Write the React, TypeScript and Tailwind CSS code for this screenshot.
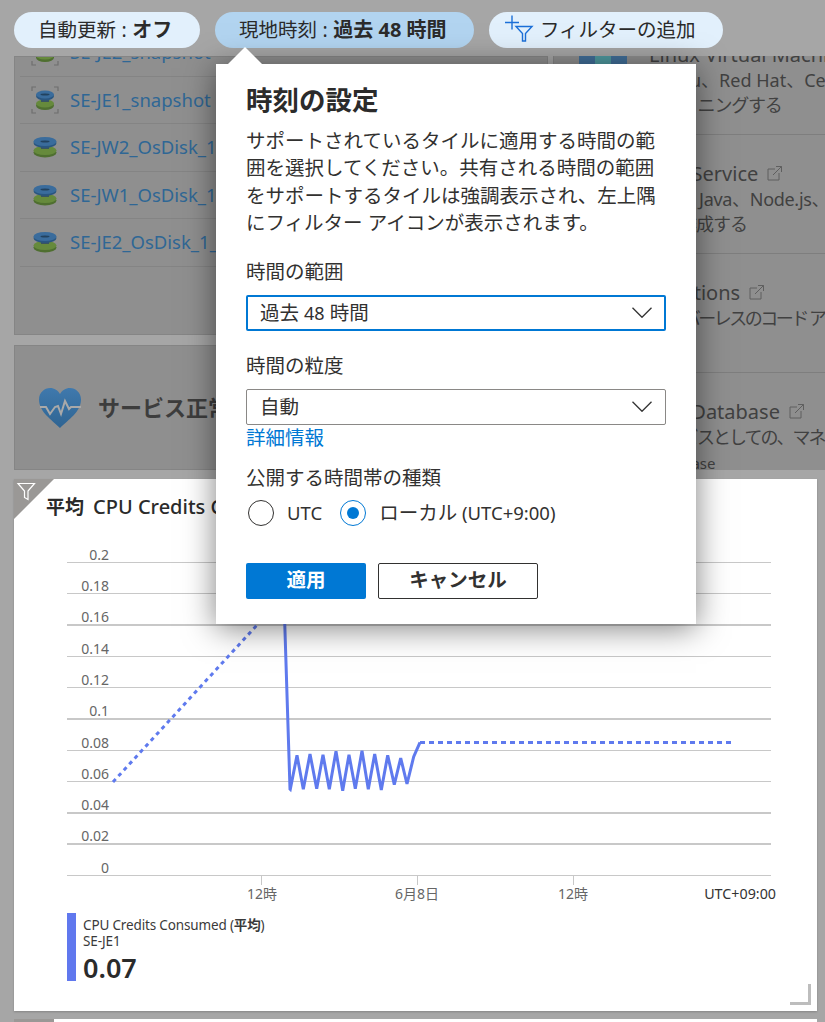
import React from 'react';

const cjk = "font-['Noto_Sans','Noto_Sans_CJK_JP',sans-serif]";

const diskRows = [
  { name: 'SE-JE2_snapshot', snapshot: true },
  { name: 'SE-JE1_snapshot', snapshot: true },
  { name: 'SE-JW2_OsDisk_1', snapshot: false },
  { name: 'SE-JW1_OsDisk_1', snapshot: false },
  { name: 'SE-JE2_OsDisk_1_', snapshot: false },
];

const gridLines = [
  { label: '0.2', y: 562.5, w: 1 },
  { label: '0.18', y: 593.5, w: 1 },
  { label: '0.16', y: 625, w: 2 },
  { label: '0.14', y: 656.5, w: 1 },
  { label: '0.12', y: 687.5, w: 1 },
  { label: '0.1', y: 719, w: 2 },
  { label: '0.08', y: 750.5, w: 1 },
  { label: '0.06', y: 781.5, w: 1 },
  { label: '0.04', y: 813, w: 2 },
  { label: '0.02', y: 844, w: 2 },
  { label: '0', y: 875.5, w: 1 },
];

const zigX = [691, 711, 730, 750, 770, 789, 808, 828, 848, 867, 886, 906, 925, 944, 964, 983, 1003, 1022, 1041, 1061, 1080];
const zigY = [508, 406, 508, 402, 506, 404, 508, 394, 512, 404, 506, 392, 508, 402, 510, 406, 494, 414, 492, 410, 367];
const zigzag = zigX.map((x, i) => `${(x / 3 + 60).toFixed(1)},${(zigY[i] / 3 + 620).toFixed(1)}`).join(' ');

const DiskIcon = ({ snapshot }: { snapshot: boolean }) => (
  <svg width="28" height="28" viewBox="0 0 28 28" className="shrink-0">
    {snapshot && (
      <path d="M1 5V1h4M23 1h4v4M27 23v4h-4M5 27H1v-4" fill="none" stroke="#6f6f6f" strokeWidth="1.2" />
    )}
    <ellipse cx="14" cy="19.500" rx={snapshot ? 9 : 11.5} ry={snapshot ? 4.5 : 5} fill="#4f6f30" />
    <ellipse cx="14" cy="17.500" rx={snapshot ? 9 : 11.5} ry={snapshot ? 4 : 4.5} fill="#668a3c" />
    <rect x="10" y="11" width="8" height="5" fill="#3a5560" />
    <ellipse cx="14" cy="10" rx={snapshot ? 9 : 11.5} ry={snapshot ? 4.5 : 5} fill="#2a5680" />
    <ellipse cx="14" cy="8.500" rx={snapshot ? 9 : 11.5} ry={snapshot ? 4 : 4.5} fill="#3a6c9c" />
    <ellipse cx="14" cy="8.500" rx="4.500" ry="1.100" fill="#22425f" />
  </svg>
);

const ExternalLink = () => (
  <svg width="17" height="17" viewBox="0 0 17 17" className="ml-2 shrink-0" fill="none" stroke="#5f5f5f" strokeWidth="1">
    <path d="M9 4H2v11h11V8" />
    <path d="M7 10l8.500-8.500M10 1.500h5.500V7" />
  </svg>
);

const Chevron = () => (
  <svg width="20" height="11" viewBox="0 0 20 11" fill="none" stroke="#333" strokeWidth="1.3">
    <path d="M0.500 0.800l9.500 9.500 9.500-9.500" />
  </svg>
);

const ServiceRow = ({ title, link = true, lines, small }: { title: string; link?: boolean; lines: { text: string; className?: string }[]; small?: string }) => (
  <div className="h-[119px] border-b border-[#7e7e7e] pl-[95px] pt-[25px] whitespace-nowrap text-[#414141]">
    <div className="flex items-center h-[27px] text-[20px] leading-[27px]">
      {title}
      {link && <ExternalLink />}
    </div>
    {lines.map((line) => (
      <div key={line.text} className={`text-[18px] h-[24.500px] leading-[24.500px] ${line.className ?? ''}`}>
        {line.text}
      </div>
    ))}
    {small && <div className="text-[15px] leading-[22px] mt-[2px]">{small}</div>}
  </div>
);

const FieldLabel = ({ children, className }: { children: React.ReactNode; className: string }) => (
  <div className={`text-[19.500px] leading-[27px] text-[#323130] ${className}`}>{children}</div>
);

const Radio = ({ checked }: { checked?: boolean }) => (
  <span className={`flex items-center justify-center w-[26px] h-[26px] rounded-full border ${checked ? 'border-[#0078d4]' : 'border-[#323130]'}`}>
    {checked && <span className="w-[12px] h-[12px] rounded-full bg-[#0078d4]" />}
  </span>
);

const App = () => {
  return (
    <div className={`relative w-[825px] h-[1022px] overflow-hidden bg-[#a6a6a6] ${cjk}`}>
      {/* Top bar */}
      <div className="relative z-10 flex items-center h-[56px] pl-[14px] pt-[4px] bg-[#a6a6a6] text-[#2b2b2b] text-[19.500px] whitespace-nowrap">
        <div className="flex items-center w-[186px] h-[36px] pl-[24px] rounded-full bg-[#e2f0fc]">
          自動更新<span className="mx-[5.500px]">:</span><b className="font-bold text-[20px]">オフ</b>
        </div>
        <div className="flex items-center w-[259px] h-[36px] ml-[15px] pl-[24px] rounded-full bg-[#b2d4f0]">
          現地時刻<span className="mx-[5.500px]">:</span><b className="font-bold text-[20px]">過去 48 時間</b>
        </div>
        <div className="flex items-center w-[234px] h-[36px] ml-[15px] pl-[16px] rounded-full bg-[#e2f0fc]">
          <svg width="30" height="28" viewBox="0 0 30 28" fill="none" stroke="#1b6fd8" strokeWidth="1.4" className="-mt-[3px] mr-[5px]">
            <path d="M0 7.500h14M7 0.500v14" />
            <path d="M11 11.500h16l-6.500 7v7.500h-3v-7.500z" />
          </svg>
          フィルターの追加
        </div>
      </div>

      {/* Dimmed dashboard behind the dialog */}
      <div className="pl-[14px]">
        <div className="grid grid-cols-[534px_272px] gap-x-[5px] h-[414px]">
          <div className="flex flex-col gap-y-[10px]">
            <div className="h-[279px] overflow-hidden bg-[#8f8f8f] border border-[#858585]">
              <div className="-mt-[28px]">
                {diskRows.map((row) => (
                  <div key={row.name} className="flex items-center h-[47.500px] ml-[5px] pl-[11px] border-b border-[#848484] text-[18.500px] text-[#2f6795]">
                    <DiskIcon snapshot={row.snapshot} />
                    <span className="ml-[11px] whitespace-nowrap">{row.name}</span>
                  </div>
                ))}
              </div>
            </div>
            <div className="flex items-center h-[125px] pl-[23px] bg-[#8f8f8f] border border-[#858585]">
              <svg width="44" height="42" viewBox="0 0 44 42">
                <defs>
                  <linearGradient id="heart" x1="0" y1="0" x2="0" y2="1">
                    <stop offset="0" stopColor="#3f79ad" />
                    <stop offset="1" stopColor="#2f6492" />
                  </linearGradient>
                </defs>
                <path d="M22 41C14 33 1 25 1 12.500 1 5.500 6.500 1 12 1c4.500 0 8 2.500 10 6 2-3.500 5.500-6 10-6 5.500 0 11 4.500 11 11.500C43 25 30 33 22 41z" fill="url(#heart)" />
                <path d="M2 20h6l4 7 5-7 3-1 3 8 4-13 4 8 2-2h10" fill="none" stroke="#a9a9a9" strokeWidth="2" />
              </svg>
              <span className="ml-[16px] text-[22px] font-bold text-[#3d3d3d] whitespace-nowrap">サービス正常性</span>
            </div>
          </div>

          <div className="overflow-hidden bg-[#8f8f8f] border-l border-[#858585]">
            <div className="-mt-[40px]">
              <div className="relative">
                <div className="absolute left-[25px] top-0 w-[48px] h-[48px] bg-[#416f99]">
                  <div className="mx-auto w-[16px] h-full bg-[#4f9aa0]" />
                </div>
                <ServiceRow title="Linux Virtual Machines" link={false} lines={[{ text: 'Ubuntu、Red Hat、CentOS などを', className: '-ml-[12px]' }, { text: 'ジョニングする', className: 'ml-[15px] tracking-[-1.200px]' }]} />
              </div>
              <ServiceRow title="App Service" lines={[{ text: '.NET、Java、Node.js、PHP', className: '-ml-[5px] tracking-[-0.300px]' }, { text: 'を作成する', className: 'ml-[13px] tracking-[-1px]' }]} />
              <ServiceRow title="Functions" lines={[{ text: 'サーバーレスのコード アプリ', className: 'ml-[3px] tracking-[-2.500px]' }]} />
              <ServiceRow title="SQL Database" lines={[{ text: 'サービスとしての、マネージド', className: 'tracking-[-2px]' }]} small="Database" />
            </div>
          </div>
        </div>

        {/* Chart tile */}
        <div className="relative w-[803px] h-[532px] mt-[9px] bg-white shadow-[0_1px_2px_rgba(0,0,0,0.2)]">
          <svg width="41" height="41" viewBox="0 0 41 41" className="absolute left-0 top-0">
            <polygon points="0,0 40,0 0,40" fill="#9a9896" />
            <path d="M4 4.500h16.500l-6.500 7.500v8.500l-3.500-2v-6.500z" fill="none" stroke="#fff" strokeWidth="1.2" />
          </svg>
          <div className="pl-[32px] pt-[14px] h-[61px] text-[19px] leading-[28px] font-semibold text-[#2b2b2b] whitespace-nowrap">
            平均<span className="ml-[9px] text-[20px] font-medium">CPU Credits Consumed</span>
          </div>
          <svg width="803" height="365" viewBox="14 540 803 365" className="block">
            {gridLines.map((line) => (
              <g key={line.label}>
                <line x1="67" x2="771" y1={line.y} y2={line.y} stroke="#c8c8c8" strokeWidth={line.w} />
                <text x="109" y={line.y - 3} textAnchor="end" fontSize="14" fill="#666">{line.label}</text>
              </g>
            ))}
            {[261.5, 417.5, 573.5].map((x) => (
              <line key={x} x1={x} x2={x} y1="875" y2="885" stroke="#c8c8c8" />
            ))}
            <text x="262" y="899" textAnchor="middle" fontSize="14" fill="#666">12時</text>
            <text x="417" y="899" textAnchor="middle" fontSize="14" fill="#666">6月8日</text>
            <text x="573" y="899" textAnchor="middle" fontSize="14" fill="#666">12時</text>
            <text x="776" y="899" textAnchor="end" fontSize="14.300" fill="#333">UTC+09:00</text>
            <line x1="113" y1="782" x2="280" y2="600" stroke="#5f7aee" strokeWidth="3" strokeDasharray="4 4" />
            <polyline points={`284,600 290,789 ${zigzag}`} fill="none" stroke="#5f7aee" strokeWidth="3" />
            <line x1="420" y1="742.500" x2="731" y2="742.500" stroke="#5f7aee" strokeWidth="3" strokeDasharray="5 4" />
          </svg>
          <div className="flex ml-[53px] mt-[8px]">
            <div className="w-[9px] h-[68px] bg-[#6078ee]" />
            <div className="ml-[7px] text-[#3a3a3a] whitespace-nowrap">
              <div className="text-[13.500px] leading-[16px] mt-[4px] tracking-[-0.150px]">
                CPU Credits Consumed (<b className="font-bold">平均</b>)
              </div>
              <div className="text-[13.500px] leading-[16px] tracking-[-0.100px]">SE-JE1</div>
              <div className="text-[27px] leading-[38px] font-semibold text-[#2b2b2b]">0.07</div>
            </div>
          </div>
          <div className="absolute right-[6px] bottom-[6px] w-[21px] h-[21px] border-r-[3px] border-b-[3px] border-[#bdbdbd]" />
        </div>

        {/* Next tile, only its top edge shows */}
        <div className="relative w-[803px] h-[40px] mt-[8px] bg-white">
          <div className="w-[40px] h-[3px] bg-[#9a9896]" />
        </div>
      </div>

      {/* Time settings dialog */}
      <div className="absolute left-[216px] top-[64px] z-20 w-[480px] h-[560px] px-[30px] bg-white shadow-[0_4px_30px_rgba(0,0,0,0.5)]">
        <div className="absolute left-[17px] -top-[12px] w-[24px] h-[24px] rotate-45 bg-white" />
        <div className="relative pt-[19px]">
          <h2 className="text-[26.500px] leading-[34px] font-bold text-[#2b2b2b]">時刻の設定</h2>
          <p className="mt-[10px] w-[430px] text-[19.500px] leading-[27.400px] text-[#323130] whitespace-nowrap">
            サポートされているタイルに適用する時間の範<br />
            囲を選択してください。共有される時間の範囲<br />
            をサポートするタイルは強調表示され、左上隅<br />
            にフィルター アイコンが表示されます。
          </p>
          <FieldLabel className="mt-[21px]">時間の範囲</FieldLabel>
          <div className="flex items-center justify-between w-[420px] h-[36px] mt-[10px] pl-[12px] pr-[12px] rounded-[2px] border-2 border-[#0078d4] text-[19.500px] text-[#323130]">
            <span>過去 <span className="text-[18px]">48</span> 時間</span>
            <Chevron />
          </div>
          <FieldLabel className="mt-[21px]">時間の粒度</FieldLabel>
          <div className="flex items-center justify-between w-[420px] h-[36px] mt-[10px] pl-[13px] pr-[13px] rounded-[2px] border border-[#8a8886] text-[19.500px] text-[#323130]">
            <span>自動</span>
            <Chevron />
          </div>
          <div className="-mt-[1px] text-[19.500px] leading-[27px] text-[#0078d4]">詳細情報</div>
          <FieldLabel className="mt-[13px]">公開する時間帯の種類</FieldLabel>
          <div className="flex items-center h-[26px] mt-[9px] pl-[2px] text-[18.500px] text-[#323130] whitespace-nowrap">
            <Radio />
            <span className="ml-[13px]">UTC</span>
            <span className="ml-[18px]"><Radio checked /></span>
            <span className="ml-[13px]"><span className="text-[19.500px]">ローカル</span> (UTC+9:00)</span>
          </div>
          <div className="flex mt-[37px] gap-x-[12px]">
            <button className="w-[120px] h-[36px] pb-[3px] rounded-[2px] bg-[#0078d4] text-white text-[19.500px] font-bold">適用</button>
            <button className="w-[160px] h-[36px] pb-[3px] rounded-[2px] border border-[#323130] text-[#323130] text-[19.500px] font-bold">キャンセル</button>
          </div>
        </div>
      </div>
    </div>
  );
};

export default App;
